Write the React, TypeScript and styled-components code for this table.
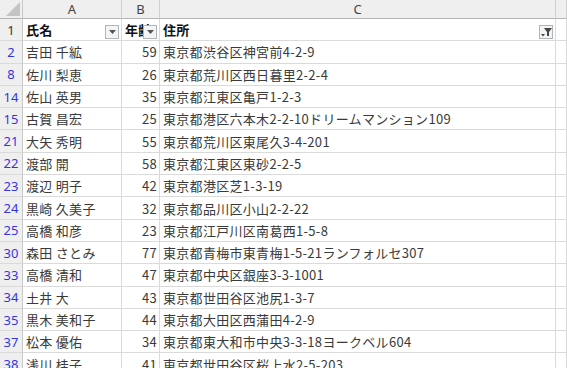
import { Fragment } from 'react';
import styled, { createGlobalStyle } from 'styled-components';

const GlobalStyle = createGlobalStyle`
	html, body {
		margin: 0;
		padding: 0;
		background: #fff;
		overflow: hidden;
	}
`;

const Sheet = styled.div`
	display: grid;
	grid-template-columns: 23px 99px 38px 396px 1fr;
	grid-template-rows: 19px;
	grid-auto-rows: 22.3px;
	width: 567px;
	height: 368px;
	overflow: hidden;
	font-family: 'Noto Sans CJK JP', 'Noto Sans', sans-serif;
	font-size: 13px;
	letter-spacing: 0.3px;
	color: #3a3a3a;
`;

const Corner = styled.div`
	background: #efefef;
	border-right: 1px solid #c8c8c8;
	border-bottom: 1px solid #b4b4b4;
	display: flex;
	align-items: flex-end;
	justify-content: flex-end;
	padding: 0 2px 2px 0;
	box-sizing: border-box;
`;

const ColHead = styled.div`
	background: #efefef;
	border-right: 1px solid #d0d0d0;
	border-bottom: 1px solid #b4b4b4;
	display: flex;
	align-items: center;
	justify-content: center;
	font-family: 'Noto Sans', 'Noto Sans CJK JP', sans-serif;
	font-size: 13px;
	letter-spacing: 0;
	color: #444;
	box-sizing: border-box;
`;

const RowHead = styled.div<{ $filtered?: boolean }>`
	background: #efefef;
	border-right: 1px solid #c8c8c8;
	border-bottom: 1px solid #dadada;
	display: flex;
	align-items: center;
	justify-content: center;
	font-family: 'Noto Sans', 'Noto Sans CJK JP', sans-serif;
	font-size: 13px;
	letter-spacing: 0;
	color: ${p => (p.$filtered ? '#3535e0' : '#333')};
	box-sizing: border-box;
`;

const Cell = styled.div<{ $align?: 'left' | 'right'; $bold?: boolean }>`
	position: relative;
	border-right: 1px solid #dadada;
	border-bottom: 1px solid #dadada;
	display: flex;
	align-items: center;
	justify-content: ${p => (p.$align === 'right' ? 'flex-end' : 'flex-start')};
	padding: 0 2px 0 3px;
	white-space: nowrap;
	overflow: hidden;
	font-weight: ${p => (p.$bold ? 700 : 400)};
	color: ${p => (p.$bold ? '#111' : '#3a3a3a')};
	box-sizing: border-box;
`;

const FilterButton = styled.div`
	position: absolute;
	right: 2px;
	top: 6px;
	width: 14px;
	height: 14px;
	box-sizing: border-box;
	border: 1px solid #aeb4bc;
	background: #f4f4f4;
	display: flex;
	align-items: center;
	justify-content: center;
`;

type Row = { n: number; name: string; age: number; addr: string };

const rows: Row[] = [
	{ n: 2, name: '吉田 千絋', age: 59, addr: '東京都渋谷区神宮前4-2-9' },
	{ n: 8, name: '佐川 梨恵', age: 26, addr: '東京都荒川区西日暮里2-2-4' },
	{ n: 14, name: '佐山 英男', age: 35, addr: '東京都江東区亀戸1-2-3' },
	{ n: 15, name: '古賀 昌宏', age: 25, addr: '東京都港区六本木2-2-10ドリームマンション109' },
	{ n: 21, name: '大矢 秀明', age: 55, addr: '東京都荒川区東尾久3-4-201' },
	{ n: 22, name: '渡部 開', age: 58, addr: '東京都江東区東砂2-2-5' },
	{ n: 23, name: '渡辺 明子', age: 42, addr: '東京都港区芝1-3-19' },
	{ n: 24, name: '黒崎 久美子', age: 32, addr: '東京都品川区小山2-2-22' },
	{ n: 25, name: '高橋 和彦', age: 23, addr: '東京都江戸川区南葛西1-5-8' },
	{ n: 30, name: '森田 さとみ', age: 77, addr: '東京都青梅市東青梅1-5-21ランフォルセ307' },
	{ n: 33, name: '高橋 清和', age: 47, addr: '東京都中央区銀座3-3-1001' },
	{ n: 34, name: '土井 大', age: 43, addr: '東京都世田谷区池尻1-3-7' },
	{ n: 35, name: '黒木 美和子', age: 44, addr: '東京都大田区西蒲田4-2-9' },
	{ n: 37, name: '松本 優佑', age: 34, addr: '東京都東大和市中央3-3-18ヨークベル604' },
	{ n: 38, name: '浅川 桂子', age: 41, addr: '東京都世田谷区桜上水2-5-203' },
];

function Arrow() {
	return (
		<svg width="7" height="4" viewBox="0 0 7 4">
			<polygon points="0,0 7,0 3.5,4" fill="#555" />
		</svg>
	);
}

function FunnelArrow() {
	return (
		<svg width="11" height="10" viewBox="0 0 11 10">
			<polygon points="3,1 11,1 8,5 8,9 6,9 6,5" fill="#444" />
			<polygon points="0,7 4,7 2,9.5" fill="#444" />
		</svg>
	);
}

export default function App() {
	return (
		<>
			<GlobalStyle />
			<Sheet>
				<Corner>
					<svg width="14" height="14" viewBox="0 0 14 14">
						<polygon points="14,0 14,14 0,14" fill="#c4c4c4" />
					</svg>
				</Corner>
				<ColHead>A</ColHead>
				<ColHead>B</ColHead>
				<ColHead>C</ColHead>
				<ColHead />

				<RowHead>1</RowHead>
				<Cell $bold>
					氏名
					<FilterButton>
						<Arrow />
					</FilterButton>
				</Cell>
				<Cell $bold>
					年齢
					<FilterButton>
						<Arrow />
					</FilterButton>
				</Cell>
				<Cell $bold>
					住所
					<FilterButton>
						<FunnelArrow />
					</FilterButton>
				</Cell>
				<Cell />

				{rows.map(r => (
					<Fragment key={r.n}>
						<RowHead $filtered>{r.n}</RowHead>
						<Cell>{r.name}</Cell>
						<Cell $align="right">{r.age}</Cell>
						<Cell>{r.addr}</Cell>
						<Cell />
					</Fragment>
				))}
			</Sheet>
		</>
	);
}
